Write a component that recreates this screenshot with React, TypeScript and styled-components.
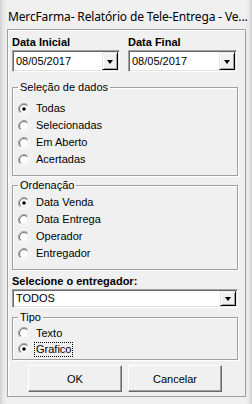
import React from 'react';
import styled, { createGlobalStyle } from 'styled-components';

const GlobalStyle = createGlobalStyle`
  html, body {
    margin: 0;
    padding: 0;
    background: #f0f0f0;
  }
  body {
    font-family: "Liberation Sans", Arial, sans-serif;
    font-size: 11px;
    color: #000;
  }
`;

const Window = styled.div`
  width: 252px;
  height: 404px;
  display: flex;
  flex-direction: column;
  overflow: hidden;
  background: linear-gradient(90deg, #cfcfcf 0px, #e6e6e6 3px, #f0f0f0 7px, #f0f0f0 245px, #e6e6e6 249px, #cfcfcf 252px);
`;

const TitleBar = styled.div`
  height: 29px;
  flex: none;
  display: flex;
  align-items: center;
  padding: 3px 0 0 8px;
  box-sizing: border-box;
  font-family: "Noto Sans", "Open Sans", sans-serif;
  font-size: 12px;
  letter-spacing: -0.15px;
  white-space: nowrap;
  color: #000;
`;

const Panel = styled.div`
  flex: 1;
  margin: 0 6px 7px 7px;
  padding: 6px 7px 0 4px;
  border: 1px solid #a0a0a0;
  box-shadow: inset 1px 1px 0 #fff;
  display: flex;
  flex-direction: column;
`;

const DateRow = styled.div`
  display: grid;
  grid-template-columns: 108px 109px;
  column-gap: 8px;
`;

const Field = styled.div`
  display: flex;
  flex-direction: column;
  gap: 1px;
`;

const BoldLabel = styled.div<{ $top?: number }>`
  font-weight: bold;
  line-height: 13px;
  height: 13px;
  margin-top: ${(p) => p.$top ?? 0}px;
`;

const Combo = styled.div<{ $height: number; $top?: number }>`
  height: ${(p) => p.$height}px;
  margin-top: ${(p) => p.$top ?? 0}px;
  box-sizing: border-box;
  display: flex;
  align-items: stretch;
  padding: 1px;
  background: #fff;
  border: 1px solid;
  border-color: #a0a0a0 #fff #fff #a0a0a0;
  box-shadow: inset 1px 1px 0 #696969, inset -1px -1px 0 #e3e3e3;
`;

const ComboText = styled.div`
  flex: 1;
  display: flex;
  align-items: center;
  padding-left: 2px;
  line-height: 13px;
`;

const DropButton = styled.div`
  width: 16px;
  flex: none;
  box-sizing: border-box;
  display: flex;
  align-items: center;
  justify-content: center;
  background: #f0f0f0;
  border: 1px solid;
  border-color: #e3e3e3 #000 #000 #e3e3e3;
  box-shadow: inset 1px 1px 0 #fff, inset -1px -1px 0 #a0a0a0;
`;

const Arrow = styled.span`
  width: 0;
  height: 0;
  border-left: 3.5px solid transparent;
  border-right: 3.5px solid transparent;
  border-top: 4px solid #000;
  margin-top: 1px;
`;

const Group = styled.fieldset<{ $top: number; $padTop: number; $padBottom: number }>`
  margin: ${(p) => p.$top}px 0 0 0;
  padding: ${(p) => p.$padTop}px 0 ${(p) => p.$padBottom}px 5px;
  border: 1px solid #a0a0a0;
  box-shadow: inset 1px 1px 0 #fff, 1px 1px 0 #fff;
  min-inline-size: auto;
`;

const Legend = styled.legend`
  padding: 0 2px;
  line-height: 13px;
`;

const Row = styled.div<{ $height: number }>`
  height: ${(p) => p.$height}px;
  display: flex;
  align-items: center;
  gap: 5px;
`;

const RadioText = styled.span<{ $focus?: boolean }>`
  line-height: 13px;
  padding: 0 1px;
  outline: ${(p) => (p.$focus ? '1px dotted #000' : 'none')};
`;

const ButtonRow = styled.div`
  margin-top: 5px;
  display: flex;
  justify-content: center;
  gap: 6px;
`;

const Button = styled.div`
  width: 94px;
  height: 27px;
  box-sizing: border-box;
  display: flex;
  align-items: center;
  justify-content: center;
  background: #f0f0f0;
  border: 1px solid;
  border-color: #fff #696969 #696969 #fff;
  box-shadow: inset -1px -1px 0 #a0a0a0;
`;

const Radio: React.FC<{ checked?: boolean }> = ({ checked }) => (
  <svg width="12" height="12" viewBox="0 0 12 12">
    <defs>
      <linearGradient id="ro" x1="0" y1="0" x2="1" y2="1">
        <stop offset="0.45" stopColor="#a0a0a0" />
        <stop offset="0.55" stopColor="#ffffff" />
      </linearGradient>
      <linearGradient id="ri" x1="0" y1="0" x2="1" y2="1">
        <stop offset="0.45" stopColor="#696969" />
        <stop offset="0.55" stopColor="#e3e3e3" />
      </linearGradient>
    </defs>
    <circle cx="6" cy="6" r="5.5" fill="#fff" stroke="url(#ro)" strokeWidth="1" />
    <circle cx="6" cy="6" r="4.5" fill="#fff" stroke="url(#ri)" strokeWidth="1" />
    {checked && <circle cx="6" cy="6" r="1.8" fill="#000" />}
  </svg>
);

const RadioItem: React.FC<{ label: string; checked?: boolean; focus?: boolean; height: number }> = ({
  label,
  checked,
  focus,
  height,
}) => (
  <Row $height={height}>
    <Radio checked={checked} />
    <RadioText $focus={focus}>{label}</RadioText>
  </Row>
);

const DateField: React.FC<{ label: string; value: string }> = ({ label, value }) => (
  <Field>
    <BoldLabel>{label}</BoldLabel>
    <Combo $height={22}>
      <ComboText>{value}</ComboText>
      <DropButton>
        <Arrow />
      </DropButton>
    </Combo>
  </Field>
);

export default function App() {
  return (
    <>
      <GlobalStyle />
      <Window>
        <TitleBar>MercFarma- Relatório de Tele-Entrega - Ve...</TitleBar>
        <Panel>
          <DateRow>
            <DateField label="Data Inicial" value="08/05/2017" />
            <DateField label="Data Final" value="08/05/2017" />
          </DateRow>

          <Group $top={9} $padTop={6} $padBottom={7}>
            <Legend>Seleção de dados</Legend>
            <RadioItem height={17} label="Todas" checked />
            <RadioItem height={17} label="Selecionadas" />
            <RadioItem height={17} label="Em Aberto" />
            <RadioItem height={17} label="Acertadas" />
          </Group>

          <Group $top={3} $padTop={2} $padBottom={7}>
            <Legend>Ordenação</Legend>
            <RadioItem height={17} label="Data Venda" checked />
            <RadioItem height={17} label="Data Entrega" />
            <RadioItem height={17} label="Operador" />
            <RadioItem height={17} label="Entregador" />
          </Group>

          <BoldLabel $top={5}>Selecione o entregador:</BoldLabel>
          <Combo $height={19} $top={1}>
            <ComboText>TODOS</ComboText>
            <DropButton>
              <Arrow />
            </DropButton>
          </Combo>

          <Group $top={3} $padTop={1} $padBottom={2}>
            <Legend>Tipo</Legend>
            <RadioItem height={16} label="Texto" />
            <RadioItem height={16} label="Grafico" checked focus />
          </Group>

          <ButtonRow>
            <Button>OK</Button>
            <Button>Cancelar</Button>
          </ButtonRow>
        </Panel>
      </Window>
    </>
  );
}
